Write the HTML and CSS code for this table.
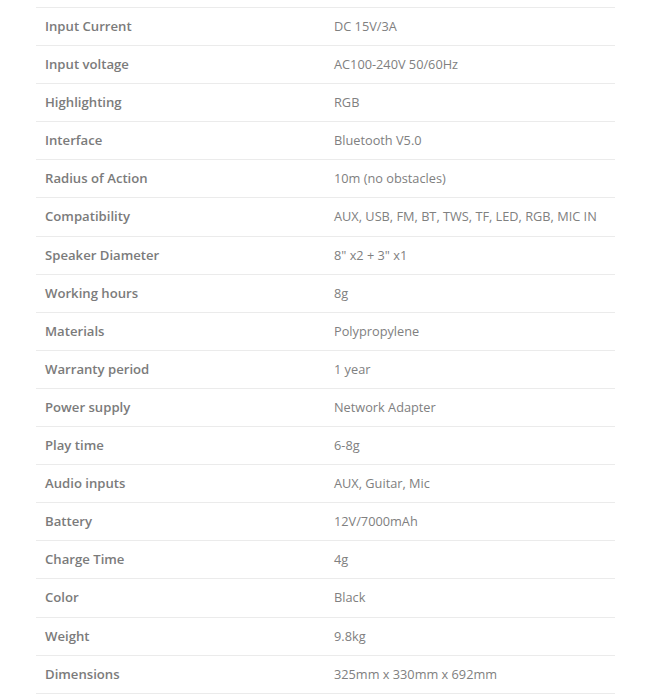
FILE: index.html
```html
<!DOCTYPE html>
<html>
<head>
<meta charset="utf-8">
<link rel="stylesheet" href="styles.css">
</head>
<body>
<div class="wrap">
<table class="specs">
<colgroup><col class="c-label"><col class="c-value"></colgroup>
<tbody>
<tr><th>Input Current</th><td>DC 15V/3A</td></tr>
<tr><th>Input voltage</th><td>AC100-240V 50/60Hz</td></tr>
<tr><th>Highlighting</th><td>RGB</td></tr>
<tr><th>Interface</th><td>Bluetooth V5.0</td></tr>
<tr><th>Radius of Action</th><td>10m (no obstacles)</td></tr>
<tr><th>Compatibility</th><td>AUX, USB, FM, BT, TWS, TF, LED, RGB, MIC IN</td></tr>
<tr><th>Speaker Diameter</th><td>8" x2 + 3" x1</td></tr>
<tr><th>Working hours</th><td>8g</td></tr>
<tr><th>Materials</th><td>Polypropylene</td></tr>
<tr><th>Warranty period</th><td>1 year</td></tr>
<tr><th>Power supply</th><td>Network Adapter</td></tr>
<tr><th>Play time</th><td>6-8g</td></tr>
<tr><th>Audio inputs</th><td>AUX, Guitar, Mic</td></tr>
<tr><th>Battery</th><td>12V/7000mAh</td></tr>
<tr><th>Charge Time</th><td>4g</td></tr>
<tr><th>Color</th><td>Black</td></tr>
<tr><th>Weight</th><td>9.8kg</td></tr>
<tr><th>Dimensions</th><td>325mm x 330mm x 692mm</td></tr>
</tbody>
</table>
</div>
</body>
</html>
```
FILE: styles.css
```css
html, body {
  margin: 0;
  padding: 0;
  background: #fff;
}
body {
  font-family: "Open Sans", "Liberation Sans", sans-serif;
  font-size: 13px;
  color: #777;
}
.wrap {
  padding: 7px 37px 0 36px;
}
.specs {
  width: 579px;
  border-collapse: collapse;
  table-layout: fixed;
}
.c-label {
  width: 289px;
}
.c-value {
  width: 290px;
}
.specs th, .specs td {
  text-align: left;
  vertical-align: middle;
  padding: 9px 9px 10.1px;
  line-height: 18px;
  border-top: 1px solid #ebebeb;
  border-bottom: 1px solid #ebebeb;
  white-space: nowrap;
}
.specs th {
  font-size: 13.15px;
  font-weight: 600;
  color: #7b7b7b;
}
.specs td {
  font-size: 12.75px;
  font-weight: 400;
  color: #808080;
}
```
